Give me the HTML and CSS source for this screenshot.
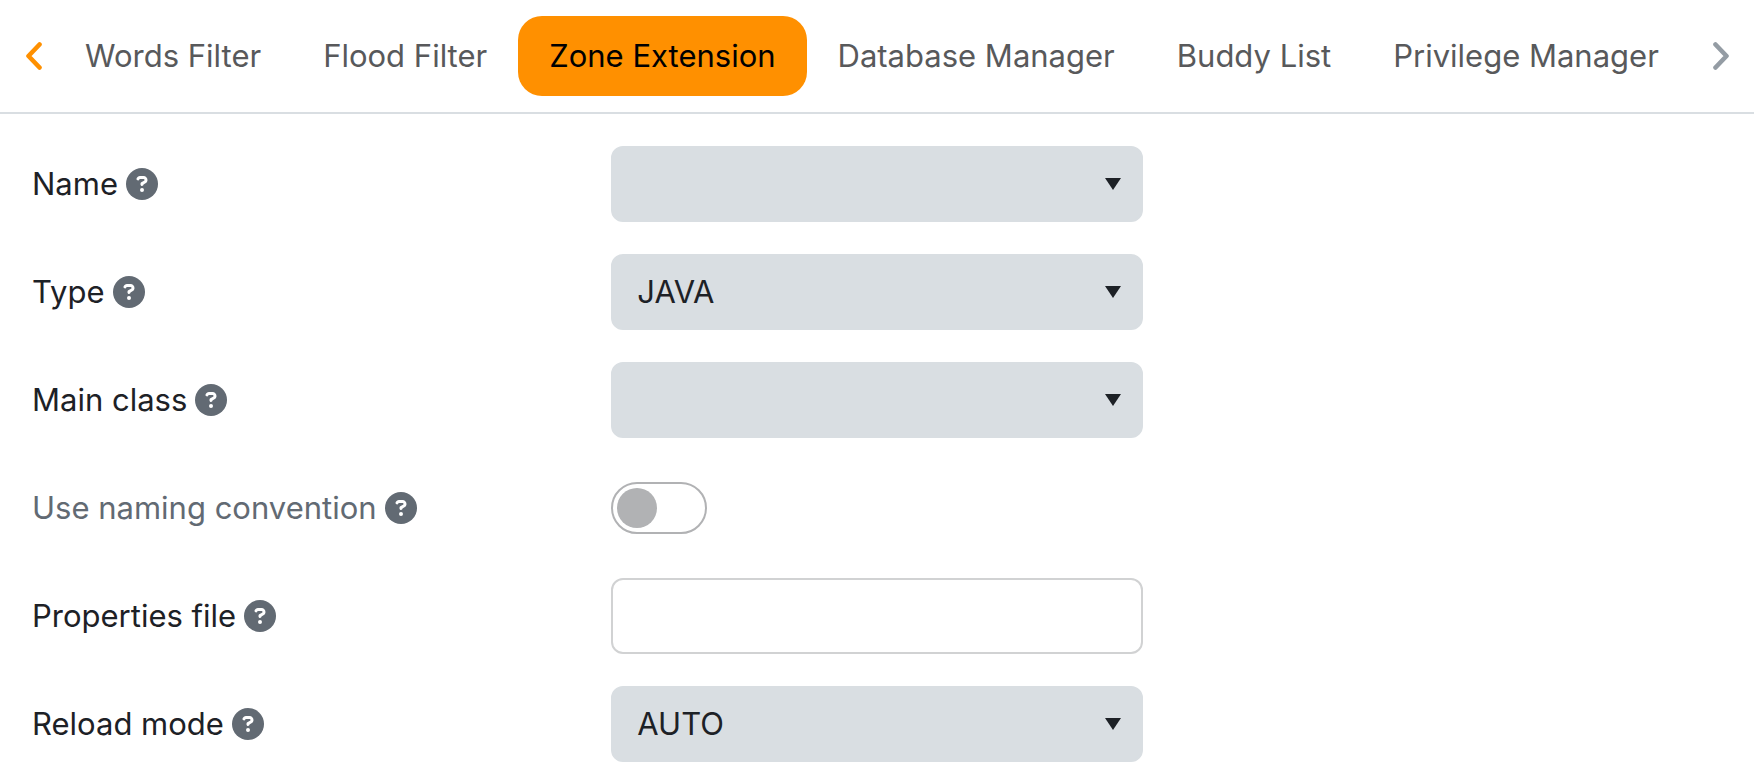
FILE: index.html
```html
<!DOCTYPE html>
<html lang="en">
  <head>
    <meta charset="UTF-8">
    <meta name="viewport" content="width=device-width, initial-scale=1.0">
    <title>Zone Extension</title>
    <link rel="stylesheet" href="styles.css">
  </head>
  <body>
    <svg class="sprite" aria-hidden="true">
      <symbol id="help" viewBox="0 0 512 512">
        <circle cx="256" cy="256" r="256" fill="#626a73"/>
        <path fill="#fff" d="M169.8 165.3c7.9-22.3 29.1-37.3 52.8-37.3h58.3c34.9 0 63.1 28.3 63.1 63.1c0 22.6-12.1 43.5-31.7 54.8L280 264.4c-.2 13-10.9 23.6-24 23.6c-13.3 0-24-10.7-24-24V250.5c0-8.6 4.6-16.5 12.1-20.8l44.3-25.4c4.7-2.7 7.6-7.7 7.6-13.1c0-8.4-6.8-15.1-15.1-15.1H222.6c-3.4 0-6.4 2.1-7.5 5.3l-.4 1.2c-4.4 12.5-18.2 19-30.6 14.6s-19-18.2-14.6-30.6l.4-1.2zM224 352a32 32 0 1 1 64 0 32 32 0 1 1-64 0z"/>
      </symbol>
      <symbol id="caret" viewBox="0 0 16 12">
        <path d="M0 0h16L8 12z" fill="#1d2126"/>
      </symbol>
    </svg>

    <nav class="tabs">
      <button class="tabs-arrow tabs-prev" type="button" aria-label="Previous tabs">
        <svg width="16" height="28" viewBox="0 0 16 28"><path d="M13.5 2.5L2.5 14l11 11.5"/></svg>
      </button>
      <div class="tabs-list" role="tablist">
        <button class="tab" type="button" role="tab">Words Filter</button>
        <button class="tab" type="button" role="tab">Flood Filter</button>
        <button class="tab active" type="button" role="tab" aria-selected="true">Zone Extension</button>
        <button class="tab" type="button" role="tab">Database Manager</button>
        <button class="tab" type="button" role="tab">Buddy List</button>
        <button class="tab" type="button" role="tab">Privilege Manager</button>
      </div>
      <button class="tabs-arrow tabs-next" type="button" aria-label="Next tabs">
        <svg width="16" height="28" viewBox="0 0 16 28"><path d="M2.5 2.5l11 11.5-11 11.5"/></svg>
      </button>
    </nav>

    <form class="settings">
      <div class="row">
        <div class="label">
          <label for="name">Name</label>
          <svg class="help"><use href="#help"/></svg>
        </div>
        <div class="dropdown">
          <select id="name"><option></option></select>
          <svg class="caret"><use href="#caret"/></svg>
        </div>
      </div>
      <div class="row">
        <div class="label">
          <label for="type">Type</label>
          <svg class="help"><use href="#help"/></svg>
        </div>
        <div class="dropdown">
          <select id="type"><option>JAVA</option></select>
          <svg class="caret"><use href="#caret"/></svg>
        </div>
      </div>
      <div class="row">
        <div class="label">
          <label for="mainClass">Main class</label>
          <svg class="help"><use href="#help"/></svg>
        </div>
        <div class="dropdown">
          <select id="mainClass"><option></option></select>
          <svg class="caret"><use href="#caret"/></svg>
        </div>
      </div>
      <div class="row">
        <div class="label muted">
          <label for="naming">Use naming convention</label>
          <svg class="help"><use href="#help"/></svg>
        </div>
        <input class="toggle" type="checkbox" role="switch" id="naming">
      </div>
      <div class="row">
        <div class="label">
          <label for="properties">Properties file</label>
          <svg class="help"><use href="#help"/></svg>
        </div>
        <input class="textbox" type="text" id="properties">
      </div>
      <div class="row">
        <div class="label">
          <label for="reload">Reload mode</label>
          <svg class="help"><use href="#help"/></svg>
        </div>
        <div class="dropdown">
          <select id="reload"><option>AUTO</option></select>
          <svg class="caret"><use href="#caret"/></svg>
        </div>
      </div>
    </form>
  </body>
</html>
```
FILE: styles.css
```css
* {
  box-sizing: border-box;
}
body {
  margin: 0;
  background: #fff;
  color: #1d2126;
  font-family: Inter, Roboto, sans-serif;
  font-size: 31px;
  line-height: 48px;
}
button,
input,
select {
  font: inherit;
  color: inherit;
  margin: 0;
}
.sprite {
  display: none;
}

.tabs {
  display: flex;
  align-items: center;
  padding: 16px 0;
  border-bottom: 2px solid #d9dee2;
}
.tabs-list {
  display: flex;
  flex: 1;
}
.tab {
  padding: 16px 31px;
  border: 0;
  border-radius: 24px;
  background: none;
  color: #58595b;
  white-space: nowrap;
}
.tab.active {
  background: #ff9000;
  color: #000;
}
.tabs-arrow {
  display: flex;
  padding: 0 12px 0 26px;
  border: 0;
  background: none;
  color: #ff9000;
}
.tabs-arrow path {
  fill: none;
  stroke: currentColor;
  stroke-width: 4.6;
  stroke-linecap: round;
  stroke-linejoin: round;
}
.tabs-next {
  padding: 0 25px 0 12px;
  color: #949ca4;
}

.settings {
  display: flex;
  flex-direction: column;
  gap: 32px;
  padding: 32px;
}
.row {
  display: grid;
  grid-template-columns: repeat(3, 1fr);
  column-gap: 48px;
  align-items: center;
  min-height: 76px;
}
.label {
  display: flex;
  align-items: center;
  gap: 8px;
}
.muted {
  color: #626a73;
}
.help {
  width: 32px;
  height: 32px;
}

.dropdown {
  display: grid;
  align-items: center;
}
.dropdown select,
.caret {
  grid-area: 1 / 1;
}
.dropdown select,
.textbox {
  width: 100%;
  height: 76px;
  padding: 0 24px;
  border: 2px solid #d9dee2;
  border-radius: 12px;
  appearance: none;
  background: #d9dee2;
}
.textbox {
  border-color: #d1d2d3;
  background: #fff;
}
.caret {
  justify-self: end;
  width: 16px;
  height: 12px;
  margin-right: 22px;
  pointer-events: none;
}

.toggle {
  display: flex;
  align-items: center;
  width: 96px;
  height: 52px;
  padding: 4px;
  border: 2px solid #b1b2b4;
  border-radius: 26px;
  appearance: none;
  background: #fff;
}
.toggle::before {
  content: "";
  width: 40px;
  height: 40px;
  border-radius: 50%;
  background: #b1b2b4;
}
.toggle:checked {
  justify-content: flex-end;
}
```
